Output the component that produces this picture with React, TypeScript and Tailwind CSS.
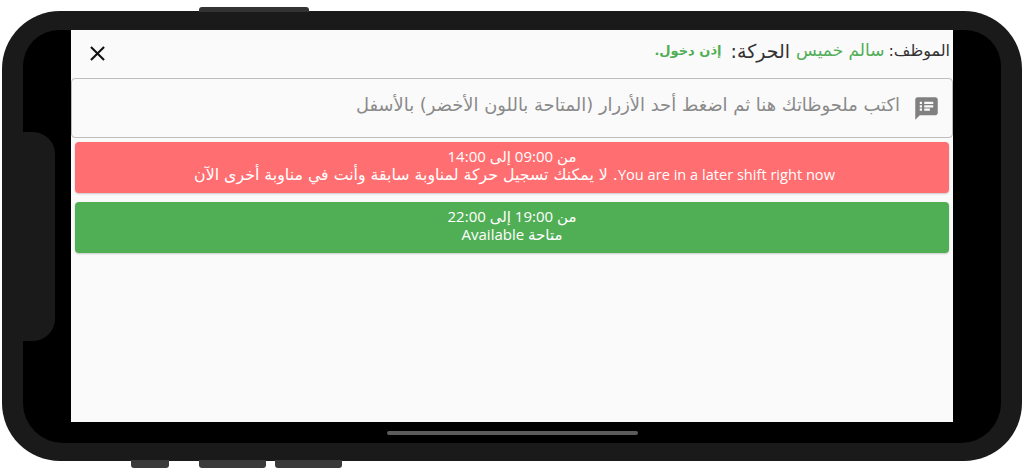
import { MdClose, MdSpeakerNotes } from 'react-icons/md'

const font = "[font-family:'DejaVu_Sans',sans-serif]"
const latin = "[font-family:'Open_Sans','DejaVu_Sans',sans-serif]"

export default function App() {
  return (
    <div className={`relative w-[1024px] h-[473px] overflow-hidden bg-white pt-[11px] pl-[2px] ${font}`}>
      {/* side buttons */}
      <div className="absolute left-[199px] top-[7px] w-[110px] h-[5px] rounded-t-[3px] bg-[#333]" />
      <div className="absolute left-[131px] top-[460px] w-[38px] h-[8px] rounded-b-[3px] bg-[#3a3a3a]" />
      <div className="absolute left-[199px] top-[460px] w-[67px] h-[8px] rounded-b-[3px] bg-[#3a3a3a]" />
      <div className="absolute left-[275px] top-[460px] w-[67px] h-[8px] rounded-b-[3px] bg-[#3a3a3a]" />

      <div className="w-[1020px] h-[450px] rounded-[58px] bg-[#1a1a1a] pt-[19px] pb-[18px] px-[21px]">
        <div className="relative w-[978px] h-[413px] rounded-b-[40px] rounded-t-[36px] bg-black px-[48px] pb-[21px]">
          {/* notch */}
          <div className="absolute left-0 top-[102px] w-[32px] h-[209px] rounded-r-[22px] bg-[#1a1a1a]" />
          {/* home bar */}
          <div className="absolute left-[364px] top-[401px] w-[251px] h-[4px] rounded-full bg-[#5c5c5c]" />

          <div dir="rtl" className="relative h-full bg-[#fafafa]">
            <div className="flex items-center justify-between h-[48px] pr-[3px] pl-[14px]">
              <div className="flex items-center whitespace-nowrap pb-[6px]">
                <span className="text-[16px] text-[#333]">الموظف:</span>
                <span className="text-[17px] text-[#50ae55] mr-[4px]">سالم خميس</span>
                <span className="text-[19px] text-[#333] mr-[6px]">الحركة:</span>
                <span className="text-[13px] font-bold text-[#50ae55] mr-[9px]">إذن دخول.</span>
              </div>
              <MdClose size={25} className="text-[#111] mb-[2px]" />
            </div>

            <div className="flex items-center h-[60px] border border-[#bdbdbd] rounded-[4px] pr-[12px] gap-[13px]">
              <MdSpeakerNotes size={27} className="text-[#808080]" />
              <span className="text-[17.9px] text-[#8a8a8a] whitespace-nowrap pb-[6px]">
                اكتب ملحوظاتك هنا ثم اضغط أحد الأزرار (المتاحة باللون الأخضر) بالأسفل
              </span>
            </div>

            <div className="flex flex-col gap-[9px] px-[4px] pt-[4px]">
              <div className="flex flex-col items-center h-[51px] pt-[5px] rounded-[4px] text-white bg-[#ff6e70] shadow-[0_1px_2px_rgba(0,0,0,0.2)]">
                <span className={`h-[18px] leading-[18px] text-[15px] ${latin}`}>من 09:00 إلى 14:00</span>
                <span className="h-[18px] leading-[18px] text-[15.8px] pl-[5px]">
                  <span className={`text-[14.6px] ${latin}`}>You are in a later shift right now</span>. لا يمكنك تسجيل حركة لمناوبة سابقة وأنت في مناوبة أخرى الآن
                </span>
              </div>
              <div className={`flex flex-col items-center h-[51px] pt-[5px] rounded-[4px] text-[15px] text-white bg-[#50ae55] shadow-[0_1px_2px_rgba(0,0,0,0.2)] ${latin}`}>
                <span className="h-[18px] leading-[18px]">من 19:00 إلى 22:00</span>
                <span className="h-[18px] leading-[18px]">متاحة Available</span>
              </div>
            </div>
          </div>
        </div>
      </div>
    </div>
  )
}
